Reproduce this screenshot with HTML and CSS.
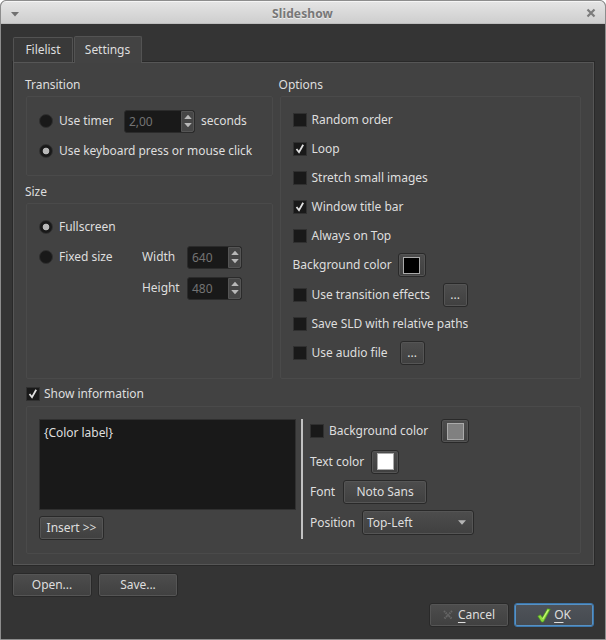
FILE: index.html
```html
<!DOCTYPE html>
<html lang="en">
<head>
<meta charset="utf-8">
<title>Slideshow</title>
<link rel="stylesheet" href="styles.css">
</head>
<body>
<div class="window">
  <header class="titlebar">
    <svg class="menu-icon" width="8" height="5" viewBox="0 0 8 5"><path d="M0 0H8L4 4.5Z" fill="#707070"/></svg>
    <h1>Slideshow</h1>
    <svg class="close-icon" width="10" height="10" viewBox="0 0 10 10"><path d="M1.5 1.5L8.5 8.5M8.5 1.5L1.5 8.5" stroke="#7c7c7c" stroke-width="2.2"/></svg>
  </header>
  <main>
    <nav class="tabs"><span class="tab">Filelist</span><span class="tab active">Settings</span></nav>
    <section class="pane">
      <div class="columns">
        <div class="left">
          <h2>Transition</h2>
          <div class="group transition">
            <div class="row"><i class="radio"></i><span class="timer-label">Use timer</span>
              <span class="spin wide"><b>2,00</b><span class="arrows"><svg width="8" height="14" viewBox="0 0 8 14"><path d="M.2 5L4 .8L7.8 5ZM.2 9H7.8L4 13.2Z" fill="#b8b8b8"/></svg></span></span><span class="seconds">seconds</span></div>
            <div class="row"><i class="radio on"></i><span>Use keyboard press or mouse click</span></div>
          </div>
          <h2 class="size-title">Size</h2>
          <div class="group size">
            <div class="row"><i class="radio on"></i><span>Fullscreen</span></div>
            <div class="row fixed"><i class="radio"></i><span class="fixed-label">Fixed size</span><span class="dimension">Width</span>
              <span class="spin"><b>640</b><span class="arrows"><svg width="8" height="14" viewBox="0 0 8 14"><path d="M.2 5L4 .8L7.8 5ZM.2 9H7.8L4 13.2Z" fill="#b8b8b8"/></svg></span></span></div>
            <div class="row height"><span class="dimension">Height</span>
              <span class="spin"><b>480</b><span class="arrows"><svg width="8" height="14" viewBox="0 0 8 14"><path d="M.2 5L4 .8L7.8 5ZM.2 9H7.8L4 13.2Z" fill="#b8b8b8"/></svg></span></span></div>
          </div>
        </div>
        <div class="right">
          <h2>Options</h2>
          <div class="group options">
            <div class="row"><i class="check"></i><span>Random order</span></div>
            <div class="row"><i class="check"><svg width="12" height="12" viewBox="0 0 12 12"><path d="M2.5 6L5 9.2L9.2 1.8" fill="none" stroke="#e0e0e0" stroke-width="1.8"/></svg></i><span>Loop</span></div>
            <div class="row"><i class="check"></i><span>Stretch small images</span></div>
            <div class="row"><i class="check"><svg width="12" height="12" viewBox="0 0 12 12"><path d="M2.5 6L5 9.2L9.2 1.8" fill="none" stroke="#e0e0e0" stroke-width="1.8"/></svg></i><span>Window title bar</span></div>
            <div class="row"><i class="check"></i><span>Always on Top</span></div>
            <div class="row color"><span class="bg-label">Background color</span><span class="button swatch"><i class="black"></i></span></div>
            <div class="row"><i class="check"></i><span class="effects-label">Use transition effects</span><span class="button dots">...</span></div>
            <div class="row relative-paths"><i class="check"></i><span>Save SLD with relative paths</span></div>
            <div class="row audio"><i class="check"></i><span class="audio-label">Use audio file</span><span class="button dots">...</span></div>
          </div>
        </div>
      </div>
      <div class="row show-info"><i class="check"><svg width="12" height="12" viewBox="0 0 12 12"><path d="M2.5 6L5 9.2L9.2 1.8" fill="none" stroke="#e0e0e0" stroke-width="1.8"/></svg></i><span>Show information</span></div>
      <div class="group info">
        <div class="editor">
          <div class="textbox">{Color label}</div>
          <span class="button insert">Insert &gt;&gt;</span>
        </div>
        <div class="divider"></div>
        <div class="appearance">
          <div class="row"><i class="check"></i><span class="info-bg">Background color</span><span class="button swatch"><i class="gray"></i></span></div>
          <div class="row"><span class="text-label">Text color</span><span class="button swatch"><i class="white"></i></span></div>
          <div class="row"><span class="font-label">Font</span><span class="button font">Noto Sans</span></div>
          <div class="row"><span class="position-label">Position</span><span class="button combo">Top-Left<svg width="8" height="5" viewBox="0 0 8 5"><path d="M0 .3H8L4 4.7Z" fill="#b4b4b4"/></svg></span></div>
        </div>
      </div>
    </section>
    <div class="file-actions"><span class="button">Open...</span><span class="button">Save...</span></div>
    <footer>
      <span class="button cancel"><svg width="10" height="10" viewBox="0 0 10 10"><path d="M1 1L9 9M9 1L1 9" stroke="#666" stroke-width="2" stroke-dasharray="1.5 .8"/></svg><span><u>C</u>ancel</span></span>
      <span class="button ok"><svg width="14" height="15" viewBox="0 0 14 15"><path d="M.8 8.2L3.3 6.7L5.5 9.4L10.4 .8L13.3 1.2L6.4 14L4.6 14.1Z" fill="#8edb3e" stroke="#4b9b1e" stroke-width=".7"/><path d="M5.7 11L11.3 1.7" stroke="#c7f577" stroke-width="1.2"/></svg><span><u>O</u>K</span></span>
    </footer>
  </main>
</div>
</body>
</html>
```
FILE: styles.css
```css
* { box-sizing: border-box; }
body { margin: 0; background: #fff; font: 12px/16px "Noto Sans", sans-serif; letter-spacing: -0.04px; color: #dedede; }
.window { width: 606px; height: 640px; border: 1px solid #8d8d8d; border-radius: 6px 6px 0 0; overflow: hidden; background: #343434; }
.titlebar { height: 23px; padding: 0 9px 0 10px; display: flex; align-items: center; justify-content: space-between; background: linear-gradient(#e4e4e4, #cecece); border-top: 1px solid #f5f5f5; border-bottom: 1px solid #bdbdbd; }
h1 { margin: 2px 0 0; font-size: 12px; line-height: 16px; font-weight: 700; letter-spacing: 0.1px; color: #777; text-shadow: 0 1px #eee; }
.menu-icon { margin-top: 3px; }
main { padding: 12px 12px 0; }
h2 { margin: 0 0 0 -1px; font-size: 12px; line-height: 16px; font-weight: 400; }
.tabs { display: flex; align-items: flex-end; height: 27px; margin-bottom: -1px; }
.tab { height: 25px; width: 60px; display: flex; justify-content: center; align-items: center; margin-bottom: 1px; background: #393939; border: 1px solid #535353; border-bottom: 0; border-radius: 2px 2px 0 0; }
.tab.active { position: relative; width: 68px; height: 27px; margin: 0 0 0 1px; padding-right: 1px; background: #434343; }
.pane { width: 581px; height: 503px; padding: 14px 12px 12px; background: #424242; border: 1px solid #565656; box-shadow: 0 0 0 1px #292929; }
.columns { display: flex; gap: 7px; }
.left { width: 247px; }
.right { width: 302px; }
.group { border: 1px solid #4a4a4a; border-radius: 2px; }
h2 + .group { margin-top: 3px; }
.row { display: flex; align-items: center; white-space: nowrap; }
.transition { height: 80px; padding: 9px 12px; }
.transition .row { height: 30px; }
.size-title { margin-top: 8px; }
.size { height: 176px; padding: 8px 12px; }
.size .row { height: 30px; }
.size .row.height { height: 32px; padding-left: 103px; }
.options { height: 283px; padding: 8px 12px; }
.options .row { height: 29px; }
.options .row.color { height: 30px; }
.options .row.audio { height: 30px; }
.radio { width: 14px; height: 14px; margin-right: 6px; border-radius: 50%; border: 1px solid #303030; background: #191919; }
.radio.on { background: radial-gradient(circle, #b8b8b8 0 2.9px, #191919 3.7px); }
.check { display: flex; width: 14px; height: 14px; margin-right: 5px; border: 1px solid #303030; background: #191919; }
.timer-label { width: 65px; }
.seconds { margin-left: 6px; }
.fixed-label { width: 83px; }
.dimension { width: 45px; }
.spin { display: flex; width: 55px; height: 23px; border: 1px solid #2b2b2b; border-radius: 3px; background: #191919; }
.spin.wide { width: 71px; }
.spin b { flex: 1; padding-left: 4px; line-height: 21px; font-weight: 400; color: #737373; }
.arrows { display: flex; align-items: center; justify-content: center; width: 13px; background: #464646; border: 1px solid #555; border-radius: 0 2px 2px 0; }
.arrows svg { flex: none; }
.button { display: flex; align-items: center; justify-content: center; height: 24px; width: 79px; border: 1px solid #292929; border-radius: 3px; background: linear-gradient(#4d4d4d, #404040); box-shadow: inset 0 0 0 1px #555; }
.swatch { width: 28px; }
.swatch i { width: 17px; height: 17px; border: 1px solid #aaa; }
.black { background: #000; }
.gray { background: #808080; }
.white { background: #fff; }
.dots { width: 25px; }
.bg-label { width: 105px; }
.effects-label { width: 131px; }
.audio-label { width: 88px; }
.show-info { height: 16px; margin-top: 7px; }
.show-info .check { margin-right: 4px; }
.info { display: flex; width: 555px; height: 148px; margin-top: 4px; padding: 12px; }
.editor { width: 257px; }
.textbox { height: 91px; padding: 5px 4px; background: #191919; border: 1px solid #303030; }
.insert { width: 65px; margin-top: 6px; }
.divider { width: 2px; height: 120px; margin-left: 5px; background: #c2c2c2; }
.appearance { margin: -3px 0 0 7px; }
.appearance .row { height: 30.5px; }
.info-bg { width: 112px; }
.text-label { width: 61px; }
.font-label { width: 33px; }
.font { width: 84px; }
.position-label { width: 52px; }
.combo { width: 112px; height: 25px; justify-content: space-between; padding: 0 7px 0 4px; }
.file-actions { display: flex; gap: 6px; margin: 8px 0 0 -1px; }
.file-actions .button { width: 80px; }
footer { display: flex; justify-content: flex-end; gap: 5px; margin: 6px -1px 0 0; }
u { text-underline-offset: 3px; }
.cancel { gap: 5px; width: 80px; }
.ok { width: 80px; gap: 3px; background: linear-gradient(#4f5359, #454a50); border-color: #3c78ae; box-shadow: inset 0 0 0 1px #5791c3; }
```
